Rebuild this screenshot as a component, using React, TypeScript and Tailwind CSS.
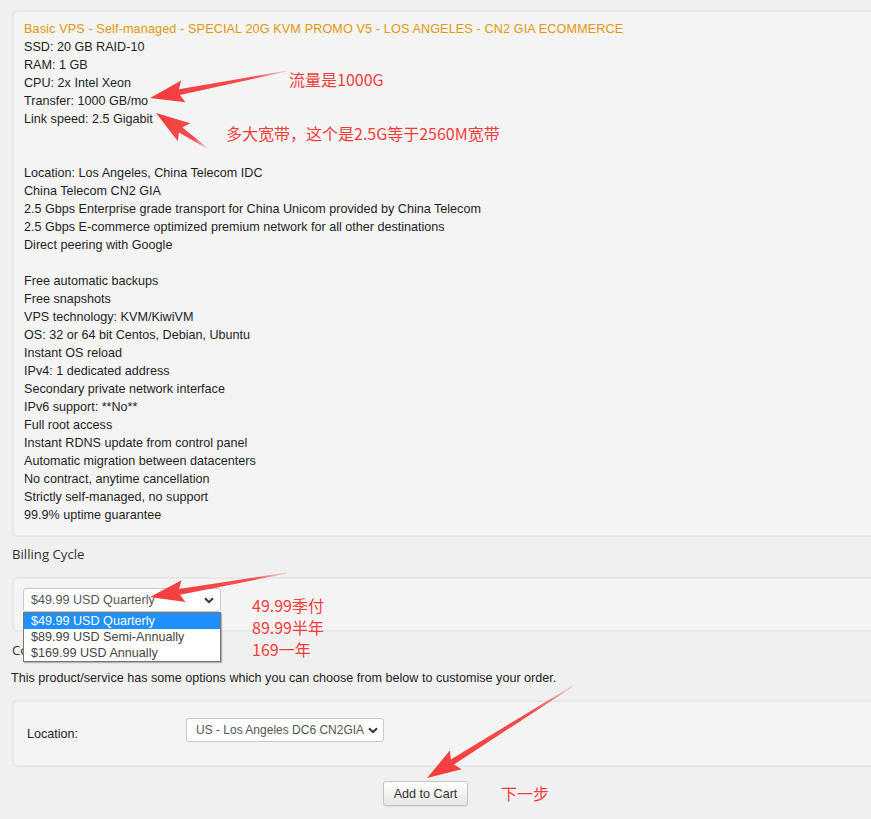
import React from "react";

const lines: string[] = [
  "SSD: 20 GB RAID-10",
  "RAM: 1 GB",
  "CPU: 2x Intel Xeon",
  "Transfer: 1000 GB/mo",
  "Link speed: 2.5 Gigabit",
  "",
  "",
  "Location: Los Angeles, China Telecom IDC",
  "China Telecom CN2 GIA",
  "2.5 Gbps Enterprise grade transport for China Unicom provided by China Telecom",
  "2.5 Gbps E-commerce optimized premium network for all other destinations",
  "Direct peering with Google",
  "",
  "Free automatic backups",
  "Free snapshots",
  "VPS technology: KVM/KiwiVM",
  "OS: 32 or 64 bit Centos, Debian, Ubuntu",
  "Instant OS reload",
  "IPv4: 1 dedicated address",
  "Secondary private network interface",
  "IPv6 support: **No**",
  "Full root access",
  "Instant RDNS update from control panel",
  "Automatic migration between datacenters",
  "No contract, anytime cancellation",
  "Strictly self-managed, no support",
  "99.9% uptime guarantee",
];

function arrowPts(
  x1: number,
  y1: number,
  x2: number,
  y2: number,
  shaftW = 6,
  headW = 22,
  headL = 30
): string {
  const dx = x2 - x1;
  const dy = y2 - y1;
  const L = Math.sqrt(dx * dx + dy * dy);
  const ux = dx / L;
  const uy = dy / L;
  const nx = -uy;
  const ny = ux;
  const bx = x2 - ux * headL;
  const by = y2 - uy * headL;
  const wx = x2 - ux * (headL + 4);
  const wy = y2 - uy * (headL + 4);
  const p = (x: number, y: number) => `${x.toFixed(1)},${y.toFixed(1)}`;
  return [
    p(x1 + nx * 0.5, y1 + ny * 0.5),
    p(bx + nx * (shaftW / 2), by + ny * (shaftW / 2)),
    p(wx + nx * (headW / 2), wy + ny * (headW / 2)),
    p(x2, y2),
    p(wx - nx * (headW / 2), wy - ny * (headW / 2)),
    p(bx - nx * (shaftW / 2), by - ny * (shaftW / 2)),
    p(x1 - nx * 0.5, y1 - ny * 0.5),
  ].join(" ");
}

const arrows = [
  { id: "a1", x1: 287, y1: 71, x2: 150, y2: 98 },
  { id: "a2", x1: 207, y1: 148, x2: 156, y2: 113 },
  { id: "a3", x1: 287, y1: 573, x2: 150, y2: 597 },
  { id: "a4", x1: 573, y1: 686, x2: 427, y2: 778 },
];

function Chevron() {
  return (
    <svg width="10" height="7" viewBox="0 0 10 7" className="shrink-0">
      <path d="M1 1.2 L5 5.2 L9 1.2" fill="none" stroke="#333" strokeWidth="2" />
    </svg>
  );
}

export default function App() {
  return (
    <div className="relative w-[871px] h-[819px] overflow-hidden bg-[#f0f0f0] font-['Liberation_Sans',Arial,sans-serif] text-[12.6px] text-[#1e1e1e]">
      <div className="pt-[10px] pl-[12px] mr-[-30px]">
        {/* Product description card */}
        <div className="rounded-[5px] border-2 border-[#e8e8e8] bg-[#f4f4f4] pt-[8px] pb-[11px] pl-[10px] leading-[18px]">
          <div className="h-[18px] whitespace-nowrap text-[#e0970f] tracking-[0.14px]">
            Basic VPS - Self-managed - SPECIAL 20G KVM PROMO V5 - LOS ANGELES - CN2 GIA ECOMMERCE
          </div>
          {lines.map((l, i) => (
            <div key={i} className="h-[18px] whitespace-nowrap">
              {l}
            </div>
          ))}
        </div>

        {/* Billing cycle */}
        <div className="mt-[7px] mb-[13px] h-[20px] leading-[20px] text-[13.2px] text-[#333] font-['Open_Sans','Noto_Sans',sans-serif]">
          Billing Cycle
        </div>
        <div className="h-[55px] rounded-[5px] border-2 border-[#e8e8e8] bg-[#f4f4f4] pt-[9px] pl-[9px]">
          <div className="flex items-center justify-between w-[198px] h-[24px] rounded-[3px] border border-[#c8c8c8] bg-white pl-[7px] pr-[6px] text-[#555]">
            <span>$49.99 USD Quarterly</span>
            <Chevron />
          </div>
        </div>

        {/* Configurable options */}
        <div className="mt-[8px] h-[20px] leading-[20px] text-[13.2px] text-[#333] font-['Open_Sans','Noto_Sans',sans-serif]">
          Configurable Options
        </div>
        <div className="mt-[10px] h-[16px] leading-[16px] -ml-[1px] whitespace-nowrap">
          This product/service has some options which you can choose from below to customise your order.
        </div>
        <div className="mt-[14px] h-[67px] rounded-[5px] border-2 border-[#e8e8e8] bg-[#f4f4f4] pt-[16px] pl-[13px] flex items-start">
          <div className="w-[159px] pt-[8px] leading-[16px]">Location:</div>
          <div className="flex items-center w-[198px] h-[24px] rounded-[3px] border border-[#c8c8c8] bg-white pl-[9px] pr-[5px] text-[#555] text-[12px]">
            <span className="w-[170px] overflow-hidden whitespace-nowrap">US - Los Angeles DC6 CN2GIA (Ecommerce)</span>
            <span className="ml-[3px]">
              <Chevron />
            </span>
          </div>
        </div>

        {/* Add to cart */}
        <div className="mt-[14px] flex items-center pl-[371px]">
          <button className="w-[85px] h-[25px] pt-[1px] rounded-[3px] border border-[#c4c4c4] bg-gradient-to-b from-white to-[#e6e6e6] text-[#333] text-[12.6px] shadow-[0_1px_1px_rgba(0,0,0,0.08)]">
            Add to Cart
          </button>
        </div>
      </div>

      {/* Open dropdown list overlay */}
      <div className="absolute left-[23px] top-[612px] w-[198px] h-[50px] border border-[#767676] bg-white shadow-[1px_1px_1px_rgba(0,0,0,0.25)] leading-[16px] text-[#444]">
        <div className="h-[16px] bg-[#1e90ff] text-white pl-[7px]">$49.99 USD Quarterly</div>
        <div className="h-[16px] pl-[7px]">$89.99 USD Semi-Annually</div>
        <div className="h-[16px] pl-[7px]">$169.99 USD Annually</div>
      </div>

      {/* Red annotations */}
      <div className="absolute inset-0 pointer-events-none font-['Noto_Sans_CJK_SC','Microsoft_YaHei',sans-serif] text-[16px] leading-[22px] text-[#f43c3c]">
        <div className="absolute left-[289px] top-[68px] whitespace-nowrap">流量是1000G</div>
        <div className="absolute left-[226px] top-[122px] whitespace-nowrap">多大宽带，这个是2.5G等于2560M宽带</div>
        <div className="absolute left-[252px] top-[594px] whitespace-nowrap">49.99季付</div>
        <div className="absolute left-[252px] top-[616px] whitespace-nowrap">89.99半年</div>
        <div className="absolute left-[252px] top-[638px] whitespace-nowrap">169一年</div>
        <div className="absolute left-[501px] top-[782px] whitespace-nowrap">下一步</div>
      </div>

      <svg className="absolute inset-0 pointer-events-none" width="871" height="819">
        <defs>
          {arrows.map((a) => (
            <linearGradient
              key={a.id}
              id={a.id}
              gradientUnits="userSpaceOnUse"
              x1={a.x1}
              y1={a.y1}
              x2={a.x2}
              y2={a.y2}
            >
              <stop offset="0" stopColor="#f43c3c" stopOpacity="0.15" />
              <stop offset="0.25" stopColor="#f43c3c" stopOpacity="0.9" />
              <stop offset="1" stopColor="#f43c3c" stopOpacity="1" />
            </linearGradient>
          ))}
        </defs>
        {arrows.map((a) => (
          <polygon key={a.id} points={arrowPts(a.x1, a.y1, a.x2, a.y2)} fill={`url(#${a.id})`} />
        ))}
      </svg>
    </div>
  );
}
